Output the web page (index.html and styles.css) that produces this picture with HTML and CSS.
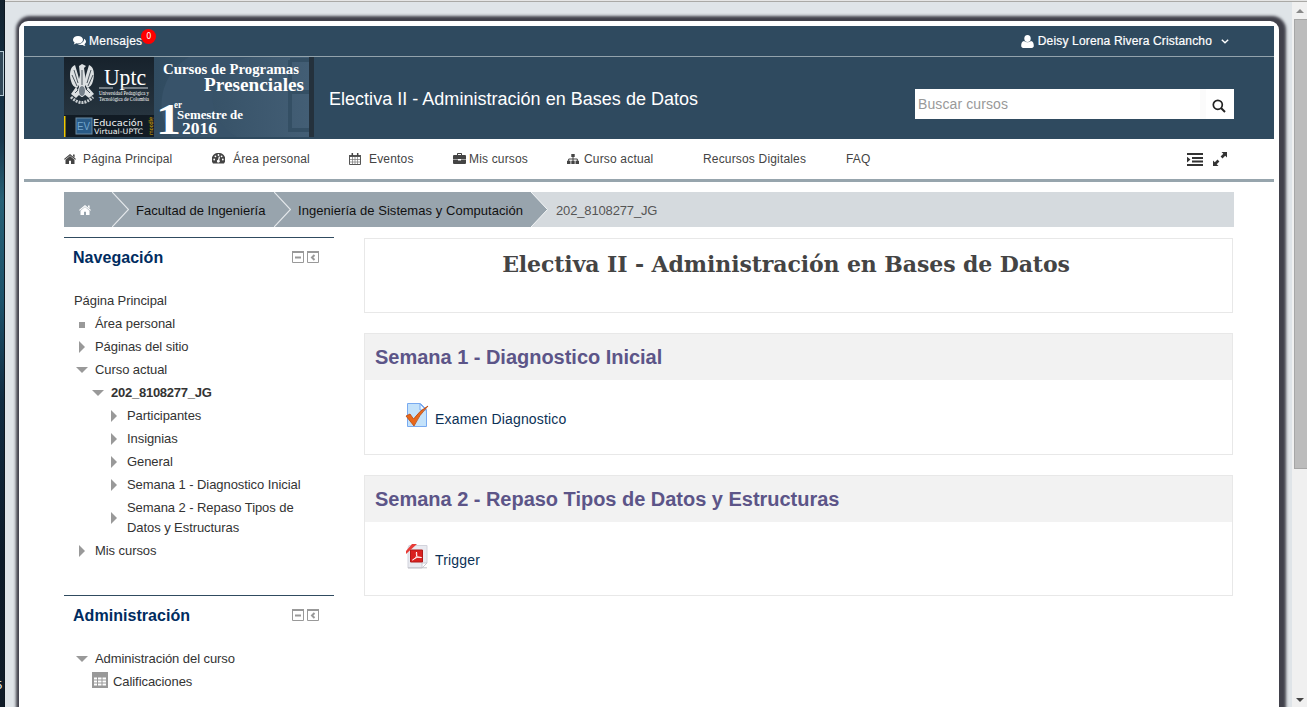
FILE: index.html
```
<!DOCTYPE html>
<html lang="es">
<head>
<meta charset="utf-8">
<title>Electiva II - Administración en Bases de Datos</title>
<link rel="stylesheet" href="styles.css">
</head>
<body>
<div class="screen">
  <div class="desktop"><span class="tile"></span><span class="clock">5</span></div>
  <div class="viewport">
    <div class="page">
      <header class="header">
        <div class="topbar">
          <a class="messages"><svg class="ico" width="13" height="11" viewBox="0 0 13 11"><path fill="#fff" d="M5 0c2.800 0 5 1.600 5 3.700S7.800 7.400 5 7.400c-.6 0-1.100 0-1.600-.2C2.500 7.900 1.500 8.300.6 8.400c.5-.6.9-1.100 1-1.900C.6 5.800 0 4.800 0 3.700 0 1.600 2.200 0 5 0z"/><path fill="#fff" d="M11 2.800c1.200.6 2 1.600 2 2.800 0 1-.6 2-1.500 2.600.1.900.5 1.400 1 1.900-1-.1-2-.5-2.900-1.200-.5.1-1 .2-1.600.2-1.400 0-2.500-.4-3.400-1C8.300 8.100 11.300 6 11 2.800z"/></svg><span class="msg-text">Mensajes</span><span class="badge">0</span></a>
          <a class="user"><svg width="13" height="13" viewBox="0 0 13 13"><ellipse cx="6.500" cy="3.500" rx="3.200" ry="3.500" fill="#fff"/><path fill="#fff" d="M3 6c2 1.600 5 1.600 7 0 2 .2 2.800 2 2.800 4.800 0 1.300-.8 2.200-2 2.200H2.200C1 13 .2 12.100.2 10.800.2 8 1 6.200 3 6z"/></svg><span class="user-text">Deisy Lorena Rivera Cristancho</span><svg width="8" height="5" viewBox="0 0 8 5"><path d="M.8.800 4 3.800 7.200.8" fill="none" stroke="#fff" stroke-width="1.400"/></svg></a>
        </div>
        <div class="banner">
          <svg class="logo" width="250" height="80" viewBox="0 0 250 80">
            <defs>
              <linearGradient id="dk" x2="0" y2="1"><stop offset="0" stop-color="#17222c"/><stop offset="1" stop-color="#26343f"/></linearGradient>
              <linearGradient id="bl" x2="1"><stop offset="0" stop-color="#304b60"/><stop offset="1" stop-color="#435e75"/></linearGradient>
            </defs>
            <rect width="250" height="80" fill="#304b60"/>
            <rect x="90" width="155" height="80" fill="url(#bl)"/>
            <path d="M125 0a55 55 0 0 0-17 80h65a42 42 0 0 1 15-80z" fill="#38536a"/>
            <path d="M226 3h19M226 3v70h19M226 35h19" fill="none" stroke="#344f64" stroke-width="4"/>
            <rect x="245" width="5" height="80" fill="#24313c"/>
            <rect width="90" height="58" fill="url(#dk)"/>
            <rect y="58" width="90" height="22" fill="#111b24"/>
            <rect y="59" width="1.500" height="21" fill="#f0c800"/>
            <g fill="#dce0e2">
              <path d="M11 8C6 10 5 17 7 24c1 4 3 6 6 7l3-5-2-8zM25 8c5 2 6 9 4 16-1 4-3 6-6 7l-3-5 2-8z"/>
              <path d="M15 9l3-2 4 2-2 2 1 7 1 8-3 9-3-1-2-8 2-8z"/>
              <path d="M12 30l-5 7 5 4 4-4zM24 30l6 7-5 4-5-4z"/>
            </g>
            <path d="M7 40q11 11 22 0" fill="none" stroke="#c9ced1" stroke-width="3" stroke-dasharray="2 1"/>
            <path d="M10 13l4 13M8 18l5 11M27 13l-4 13M29 18l-5 11M18 13v20M11 36l5-5M26 36l-5-5" fill="none" stroke="#26323c" stroke-width=".8"/>
            <ellipse cx="18" cy="34" rx="3.500" ry="5.500" fill="#75808a" stroke="#e7eaec"/>
            <g fill="#fff" font-family="'Liberation Serif',serif">
              <text x="40" y="28" font-size="23" textLength="42" lengthAdjust="spacingAndGlyphs">Uptc</text>
              <path d="M35 31h14M57 31h27" stroke="#cbd1d5" stroke-width="1"/>
              <text x="35" y="38" font-size="6" textLength="50" lengthAdjust="spacingAndGlyphs">Universidad Pedagógica y</text>
              <text x="35" y="44" font-size="6" textLength="50" lengthAdjust="spacingAndGlyphs">Tecnológica de Colombia</text>
              <g font-weight="bold">
                <text x="99" y="17" font-size="14" textLength="136" lengthAdjust="spacingAndGlyphs">Cursos de Programas</text>
                <text x="140" y="34" font-size="18" textLength="100" lengthAdjust="spacingAndGlyphs">Presenciales</text>
                <text x="92" y="77" font-size="45" textLength="25" lengthAdjust="spacingAndGlyphs">1</text>
                <text x="110" y="51" font-size="10" textLength="8" lengthAdjust="spacingAndGlyphs">er</text>
                <text x="113" y="62" font-size="13" textLength="66" lengthAdjust="spacingAndGlyphs">Semestre de</text>
                <text x="118" y="77" font-size="17" textLength="35" lengthAdjust="spacingAndGlyphs">2016</text>
              </g>
            </g>
            <rect x="12" y="61" width="16" height="16" fill="#285a86" stroke="#6c8ba2"/>
            <text x="13" y="73" font-size="10" fill="#74a8cf" font-family="'Liberation Sans',sans-serif" textLength="13" lengthAdjust="spacingAndGlyphs">EV</text>
            <g fill="#f0f2f3" font-family="'DejaVu Sans',sans-serif"><text x="29" y="69" font-size="8" textLength="50" lengthAdjust="spacingAndGlyphs">Educación</text><text x="30" y="77" font-size="7.500" textLength="49" lengthAdjust="spacingAndGlyphs">Virtual-UPTC</text></g>
            <text transform="translate(89 78) rotate(-90)" font-size="6" fill="#dca900" font-family="'DejaVu Sans',sans-serif" textLength="18" lengthAdjust="spacingAndGlyphs">moodle</text>
          </svg>
          <h2 class="site-title">Electiva II - Administración en Bases de Datos</h2>
          <div class="search"><span class="search-text">Buscar cursos</span><span class="search-btn"><svg width="14" height="14" viewBox="0 0 14 14"><circle cx="5.800" cy="5.800" r="4.500" fill="none" stroke="#222" stroke-width="1.700"/><path d="M9 9l4 4" stroke="#222" stroke-width="2"/></svg></span></div>
        </div>
      </header>
      <nav class="nav">
        <a class="n1"><svg width="12" height="10" viewBox="0 0 12 10"><path fill="#444" d="M6 0 12 5l-.7.800L6 1.500.700 5.800 0 5zM9 .5h1.600v3L9 2zM6 2.100l4.500 3.700V10H7V6.800H5V10H1.500V5.800z"/></svg><span>Página Principal</span></a>
        <a class="n2"><svg width="13" height="11" viewBox="0 0 13 11"><path fill="#444" d="M6.500 0A6.500 6.500 0 0 1 12 10.500H1A6.500 6.500 0 0 1 6.500 0z"/><g fill="#fff"><circle cx="2.200" cy="6.500" r=".9"/><circle cx="3.400" cy="3.300" r=".9"/><circle cx="6.500" cy="2" r=".9"/><circle cx="9.600" cy="3.300" r=".9"/><circle cx="10.800" cy="6.500" r=".9"/><path d="M6.800 3.500 8 3.800 7.300 7a1.500 1.500 0 1 1-1.200-.3z"/></g></svg><span>Área personal</span></a>
        <a class="n3"><svg width="12" height="12" viewBox="0 0 12 12"><path d="M.5 2.500h11v9H.5z" fill="#fff" stroke="#555"/><path stroke="#555" stroke-width="2" d="M0 3h12"/><path stroke="#777" stroke-width=".7" d="M3.500 4v7M6 4v7M8.500 4v7M1 6.500h10M1 9h10"/><path stroke="#444" stroke-width="1.500" d="M3.300 0v3M8.700 0v3"/></svg><span>Eventos</span></a>
        <a class="n4"><svg width="13" height="11" viewBox="0 0 13 11"><path fill="#444" fill-rule="evenodd" d="M4 2V.800Q4 0 4.800 0h3.400Q9 0 9 .8V2h3q1 0 1 1v3H0V3q0-1 1-1zM5 1v1h3V1zM0 6.600h5v1h3v-1h5V10q0 1-1 1H1q-1 0-1-1z"/></svg><span>Mis cursos</span></a>
        <a class="n5"><svg width="12" height="10" viewBox="0 0 12 10"><path fill="#444" d="M4.300 0h3.400v3H4.300zM0 6.700h3.500V10H0zM4.300 6.700h3.400V10H4.300zM8.500 6.700H12V10H8.500z"/><path d="M6 3v4M1.700 7V5h8.600v2" stroke="#444" fill="none"/></svg><span>Curso actual</span></a>
        <a class="n6"><span>Recursos Digitales</span></a>
        <a class="n7"><span>FAQ</span></a>
        <span class="tools"><svg width="17" height="13" viewBox="0 0 17 13"><path fill="#333" d="M0 0h16v2H0zM5 4h11v2H5zM5 7.500h11v2H5zM0 11h16v2H0zM0 3.700 3.500 6.500 0 9.500z"/></svg><svg width="14" height="14" viewBox="0 0 14 14"><path fill="#333" d="M8.500 0H14v5.500l-1.800-1.800L9.500 6.400 7.600 4.500l2.700-2.700zM0 14V8.500l1.800 1.800 2.700-2.700 1.900 1.900-2.700 2.700L5.500 14z"/></svg></span>
      </nav>
      <div class="crumbs">
        <a class="crumb home"><svg width="12" height="10" viewBox="0 0 12 10"><path fill="#fff" d="M6 0 12 5l-.7.800L6 1.500.700 5.800 0 5zM9 .5h1.600v3L9 2zM6 2.100l4.500 3.700V10H7V6.800H5V10H1.500V5.800z"/></svg></a>
        <svg class="sep" width="17" height="35"><path d="M0 0 16.500 17.500 0 35" fill="none" stroke="#e5e9ec" stroke-width="1.200"/></svg>
        <a class="crumb c2">Facultad de Ingeniería</a>
        <svg class="sep" width="17" height="35"><path d="M0 0 16.500 17.500 0 35" fill="none" stroke="#e5e9ec" stroke-width="1.200"/></svg>
        <a class="crumb c3">Ingeniería de Sistemas y Computación</a>
        <svg class="sep last" width="17" height="35"><path d="M0 0 16.500 17.500 0 35" fill="#98a4ad" stroke="#f4f6f7"/></svg>
        <a class="current">202_8108277_JG</a>
      </div>
      <div class="columns">
        <aside class="side">
          <section class="block nav-block">
            <div class="block-head"><h3 class="h-nav">Navegación</h3><span class="actions"><svg width="12" height="12"><path d="M.5 1h11v10.500H.5z" fill="none" stroke="#999"/><path d="M0 1h12M3 6.500h6" stroke="#999" stroke-width="2"/></svg><svg width="12" height="12"><path d="M.5 1h11v10.500H.5z" fill="none" stroke="#999"/><path d="M0 1h12" stroke="#999" stroke-width="2"/><path d="M7.500 4 5 6.500 7.500 9" stroke="#999" stroke-width="2" fill="none"/></svg></span></div>
            <ul class="tree">
              <li class="l0"><span>Página Principal</span></li>
              <li class="l1"><i class="sq"></i><span>Área personal</span></li>
              <li class="l1"><i class="rt"></i><span>Páginas del sitio</span></li>
              <li class="l1"><i class="dn"></i><span>Curso actual</span></li>
              <li class="l2"><i class="dn"></i><span class="active">202_8108277_JG</span></li>
              <li class="l3"><i class="rt"></i><span>Participantes</span></li>
              <li class="l3"><i class="rt"></i><span>Insignias</span></li>
              <li class="l3"><i class="rt"></i><span>General</span></li>
              <li class="l3"><i class="rt"></i><span>Semana 1 - Diagnostico Inicial</span></li>
              <li class="l3"><i class="rt"></i><span>Semana 2 - Repaso Tipos de<br>Datos y Estructuras</span></li>
              <li class="l1"><i class="rt"></i><span>Mis cursos</span></li>
            </ul>
          </section>
          <section class="block">
            <div class="block-head"><h3 class="h-adm">Administración</h3><span class="actions"><svg width="12" height="12"><path d="M.5 1h11v10.500H.5z" fill="none" stroke="#999"/><path d="M0 1h12M3 6.500h6" stroke="#999" stroke-width="2"/></svg><svg width="12" height="12"><path d="M.5 1h11v10.500H.5z" fill="none" stroke="#999"/><path d="M0 1h12" stroke="#999" stroke-width="2"/><path d="M7.500 4 5 6.500 7.500 9" stroke="#999" stroke-width="2" fill="none"/></svg></span></div>
            <ul class="tree">
              <li class="l1"><i class="dn"></i><span>Administración del curso</span></li>
              <li class="l2 grade"><svg width="16" height="16"><path d="M0 0h16v16H0z" fill="#999"/><path d="M2 6.500h3M6 6.500h3.500M10.500 6.500H14M2 9.500h3M6 9.500h3.500M10.500 9.500H14M2 12.500h3M6 12.500h3.500M10.500 12.500H14" stroke="#fff" stroke-width="2"/></svg><span>Calificaciones</span></li>
            </ul>
          </section>
        </aside>
        <main class="main">
          <section class="card intro"><h1>Electiva II - Administración en Bases de Datos</h1></section>
          <section class="card week w-one">
            <h2>Semana 1 - Diagnostico Inicial</h2>
            <div class="activity"><svg width="24" height="26" viewBox="0 0 24 26"><path d="M2.500 2.500h13l6 6v17h-19z" fill="#c4e2fa" stroke="#79aaf0"/><path d="M15 3v6h6z" fill="#eef7ff" stroke="#79aaf0"/><path d="M1 15l4-2 3.500 5Q15 9 23 5 14 14 9 25z" fill="#e8681b" stroke="#b9480c" stroke-width=".8"/></svg><span>Examen Diagnostico</span></div>
          </section>
          <section class="card week w-two">
            <h2>Semana 2 - Repaso Tipos de Datos y Estructuras</h2>
            <div class="activity"><svg width="24" height="26" viewBox="0 0 24 26"><path d="M4 2.500h18V20l-5 5H3V5z" fill="#e9eaf0" stroke="#d2d3dc"/><path d="M17 25v-5h5z" fill="#fff" stroke="#c9cad3"/><path d="M3 24.800h19" stroke="#c2c2c8"/><path d="M1 8 7 1h5L1 11z" fill="#e83b36"/><path d="M5.500 7h12v12h-12z" fill="#d9201f" stroke="#b01818"/><path d="M7.500 17c3-1 5-4 4-8-1 4 2 6 5 5.500-3-1-6 0-9 2.500z" fill="none" stroke="#fff" stroke-width=".9"/></svg><span>Trigger</span></div>
          </section>
        </main>
      </div>
    </div>
  </div>
  <div class="scrollbar"><i class="up"></i><span class="thumb"></span><i class="down"></i></div>
</div>
</body>
</html>
```
FILE: styles.css
```
* { box-sizing: border-box; }
body { margin: 0; overflow: hidden; font-family: "Liberation Sans", Arial, sans-serif; font-size: 13px; color: #333; }
h1, h2, h3, ul { margin: 0; padding: 0; list-style: none; }
svg { flex: none; display: block; }
a, span { white-space: nowrap; }
.screen { display: flex; height: 707px; background: #dfe4e8; border-top: 1px solid #e5e5e5; }
.desktop { width: 5px; margin-top: -1px; background: linear-gradient(#14222e, #122a3c 50px, #18374c 140px, #276076 200px, #1c526b 300px, #112c42 400px, #0c1a29 560px, #101c28); border-right: 1px solid #0d1721; overflow: hidden; display: flex; flex-direction: column; }
.tile { height: 45px; margin-top: 51px; border: 1px solid #b6cbd5; border-left: 0; background: #314859; }
.clock { margin-top: 582px; margin-left: -4px; font-size: 11px; line-height: 14px; color: #fff; }
.viewport { width: 1287px; border-top: 1px solid #aaa9a6; padding: 19px 13px 0 14px; overflow: hidden; }
.page { width: 1260px; height: 740px; background: #fff; border-radius: 9px; padding: 5px; box-shadow: 2px 0 3px 5px #41414b; }
.header { height: 113px; background: #2f4a5f; color: #fff; }
.topbar { height: 31px; border-bottom: 1px solid #93a3ac; display: flex; justify-content: space-between; padding: 0 45px 0 49px; font-size: 12px; }
.messages, .user { display: flex; align-items: center; height: 30px; }
.msg-text { margin-left: 3px; letter-spacing: .25px; -webkit-text-stroke: .2px #fff; }
.badge { width: 15px; height: 15px; border-radius: 50%; background: #f00; font-size: 8px; line-height: 15px; text-align: center; margin: -10px 0 0 -1px; font-family: "DejaVu Sans", sans-serif; }
.user svg:last-child { margin-left: 9px; }
.user-text { margin-left: 4px; letter-spacing: .16px; -webkit-text-stroke: .2px #fff; }
.banner { display: flex; padding: 0 40px; height: 82px; }
.logo { overflow: visible; }
.site-title { font-size: 18px; font-weight: 400; line-height: 20px; margin: 32px 0 0 15px; white-space: nowrap; letter-spacing: .02px; }
.search { width: 319px; height: 30px; background: #fff; margin: 32px 0 0 auto; display: flex; justify-content: space-between; }
.search-text { color: #999; font-size: 14px; line-height: 30px; padding-left: 3px; letter-spacing: .1px; }
.search-btn { width: 34px; border-left: 6px solid #fbfbfb; padding: 10px 0 0 6px; }
.nav { height: 43px; border-bottom: 3px solid #97a5ad; display: flex; padding-left: 40px; color: #444; font-size: 12px; letter-spacing: .17px; }
.nav a { display: flex; align-items: center; height: 39px; flex: none; }
.n1 { width: 148px; } .n1 span { margin-left: 7px; }
.n2 { width: 137px; } .n2 span { margin-left: 8px; }
.n3 { width: 104px; } .n3 span { margin-left: 8px; }
.n4 { width: 114px; } .n4 span { margin-left: 3px; }
.n5 { width: 136px; } .n5 span { margin-left: 5px; }
.n6 { width: 143px; }
.tools { display: flex; align-items: center; gap: 9px; height: 40px; margin-left: auto; margin-right: 47px; }
.crumbs { margin: 10px 40px 0; height: 35px; background: #d5dade; display: flex; line-height: 37px; }
.crumb { background: #98a4ad; color: #111; }
.home { width: 48px; padding: 13px 0 0 15px; }
.sep { background: #98a4ad; }
.last { background: #d5dade; }
.c2 { width: 145px; padding-left: 7px; }
.c3 { width: 240px; padding-left: 7px; letter-spacing: .05px; }
.current { color: #555; padding-left: 8px; letter-spacing: -.15px; }
.columns { display: flex; gap: 30px; padding: 10px 41px 0 40px; }
.side { width: 270px; flex: none; }
.block { border-top: 1px solid #304b60; }
.nav-block { height: 358px; }
.block-head { display: flex; justify-content: space-between; padding: 9px 15px 0 9px; height: 51px; }
.block-head h3 { font-size: 16px; line-height: 22px; color: #002c60; letter-spacing: .04px; }
.actions { display: flex; gap: 3px; padding-top: 4px; }
.tree { letter-spacing: -.07px; }
.tree li { display: flex; align-items: center; min-height: 23px; line-height: 20px; padding: 2px 0 1px; }
.tree .l0 { padding-left: 10px; }
.tree .l1 { padding-left: 12px; }
.tree .l2 { padding-left: 28px; }
.tree .l3 { padding-left: 44px; }
.tree i { width: 12px; margin-right: 7px; flex: none; display: flex; justify-content: center; }
.tree i::before { content: ""; }
.rt::before { border: 6px solid transparent; border-left-color: #999; border-right: 0; }
.dn::before { border: 6px solid transparent; border-top-color: #999; border-bottom: 0; margin-top: -1px; }
.sq::before { width: 6px; height: 6px; background: #999; margin-top: 2px; }
.active { font-weight: 700; letter-spacing: -.25px; }
.grade span { margin-left: 5px; }
.grade svg { margin-top: -5px; }
.main { width: 869px; padding-top: 1px; }
.card { border: 1px solid #e8e8e8; }
.intro { height: 75px; margin-bottom: 20px; }
.intro h1 { font: 700 22px/32px "DejaVu Serif", serif; letter-spacing: -.1px; text-align: center; color: #444; padding: 9px 25px 0 0; white-space: nowrap; }
.week { height: 121px; }
.w-one { height: 122px; margin-bottom: 20px; }
.week h2 { height: 46px; background: #f2f2f2; font-size: 20px; line-height: 46px; color: #5c5588; padding-left: 10px; white-space: nowrap; letter-spacing: -.02px; }
.activity { display: flex; padding: 21px 0 0 40px; font-size: 14px; color: #0b3156; line-height: 20px; letter-spacing: .17px; }
.activity span { padding: 8px 0 0 6px; }
.w-two .activity span { padding-top: 7px; }
.scrollbar { width: 15px; border-top: 1px solid #aaa9a6; background: #f0f0f0; padding-left: 2px; display: flex; flex-direction: column; }
.up { border: 4px solid transparent; border-bottom-color: #888; border-top: 0; margin: 7px 0 0 2px; width: 0; }
.thumb { height: 450px; margin-top: 6px; background: #bcbcbc; border: 1px solid #a6a6a6; border-right: 0; }
.down { border: 4px solid transparent; border-top-color: #444; border-bottom: 0; margin: auto 0 5px 2px; width: 0; }
```
